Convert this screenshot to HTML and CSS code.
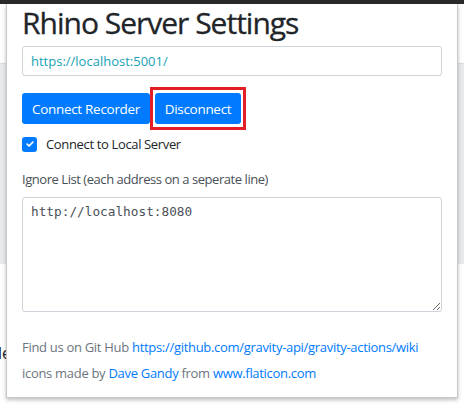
FILE: index.html
```html
<!DOCTYPE html>
<html>
<head>
<meta charset="utf-8">
<link rel="stylesheet" href="styles.css">
</head>
<body>
<div class="topbar"></div>
<div class="page">
  <div class="page-head"></div>
  <div class="page-band"></div>
  <div class="page-text">le</div>
</div>
<div class="popup">
  <h1 class="title">Rhino Server Settings</h1>
  <input class="field url" type="text" value="https://localhost:5001/">
  <div class="buttons">
    <button class="btn connect">Connect Recorder</button>
    <button class="btn marked">Disconnect</button>
  </div>
  <label class="check">
    <span class="box"><svg width="10" height="10" viewBox="0 0 10 10"><path d="M2.2 5.2 L4.1 7 L7.8 3.2" fill="none" stroke="#fff" stroke-width="1.7" stroke-linecap="round" stroke-linejoin="round"/></svg></span>
    <span>Connect to Local Server</span>
  </label>
  <div class="label">Ignore List (each address on a seperate line)</div>
  <textarea class="field area">http://localhost:8080</textarea>
  <p class="foot first">Find us on Git Hub <a href="#">https://github.com/gravity-api/gravity-actions/wiki</a></p>
  <p class="foot">icons made by <a href="#">Dave Gandy</a> from <a href="#">www.flaticon.com</a></p>
</div>
</body>
</html>
```
FILE: styles.css
```css
html, body { margin: 0; padding: 0; }
body {
  width: 464px;
  height: 407px;
  overflow: hidden;
  background: #fff;
  font-family: "Open Sans", "Noto Sans", sans-serif;
  position: relative;
}
.topbar { height: 4px; background: #2a2a2b; }
.page { position: relative; height: 403px; }
.page-head { height: 59px; border-bottom: 1px solid #dcdcdc; background: #fff; }
.page-band { height: 200px; background: #e9ecef; }
.page-text { font-size: 16px; color: #222; padding-top: 78px; margin-left: -2px; }

.popup {
  position: absolute;
  left: 6px;
  top: 4px;
  width: 420px;
  height: 393px;
  box-sizing: content-box;
  padding: 0 15px;
  background: #fff;
  border: 1px solid #c8c8c8;
  border-top: none;
  box-shadow: 0 2px 4px rgba(0,0,0,0.25);
  display: flex;
  flex-direction: column;
  align-items: flex-start;
}
.title {
  margin: 0;
  font-size: 30px;
  font-weight: 500;
  line-height: 38px;
  color: #212529;
  letter-spacing: -1px;
  -webkit-text-stroke: 0.3px #212529;
}
.field {
  box-sizing: border-box;
  width: 420px;
  border: 1px solid #ced4da;
  border-radius: 3px;
  font-size: 13px;
  padding: 0 8px;
  background: #fff;
  outline: none;
}
.url {
  margin-top: 4px;
  height: 30px;
  color: #17a2b8;
  font-family: "Open Sans", "Noto Sans", sans-serif;
}
.buttons {
  display: flex;
  align-items: center;
  margin-top: 17px;
}
.btn {
  background: #007bff;
  color: #fff;
  border: none;
  border-radius: 3px;
  height: 31px;
  padding: 0;
  font-family: "Open Sans", "Noto Sans", sans-serif;
  font-size: 13.5px;
  letter-spacing: -0.3px;
  cursor: pointer;
}
.connect { width: 128px; }
.marked {
  position: relative;
  margin-left: 5px;
  width: 86px;
}
.marked::after {
  content: "";
  position: absolute;
  left: -5px;
  right: -5px;
  top: -6px;
  bottom: -6px;
  border: 3px solid #e41e26;
}
.check {
  display: flex;
  align-items: center;
  gap: 9px;
  margin-top: 11px;
  font-size: 13px;
  letter-spacing: -0.35px;
  color: #212529;
}
.box {
  width: 15px;
  height: 15px;
  border-radius: 3px;
  background: #007bff;
  display: flex;
  align-items: center;
  justify-content: center;
}
.label {
  margin-top: 17px;
  font-size: 13px;
  letter-spacing: -0.45px;
  color: #495057;
}
.area {
  margin-top: 9px;
  height: 115px;
  padding: 6px 8px;
  font-family: "DejaVu Sans Mono", monospace;
  font-size: 12.75px;
  color: #495057;
  resize: vertical;
}
.foot {
  margin: 0;
  font-size: 13px;
  letter-spacing: -0.3px;
  color: #6c757d;
  line-height: 26px;
}
.foot.first { margin-top: 22px; }
.foot a { color: #007bff; text-decoration: none; }
```
